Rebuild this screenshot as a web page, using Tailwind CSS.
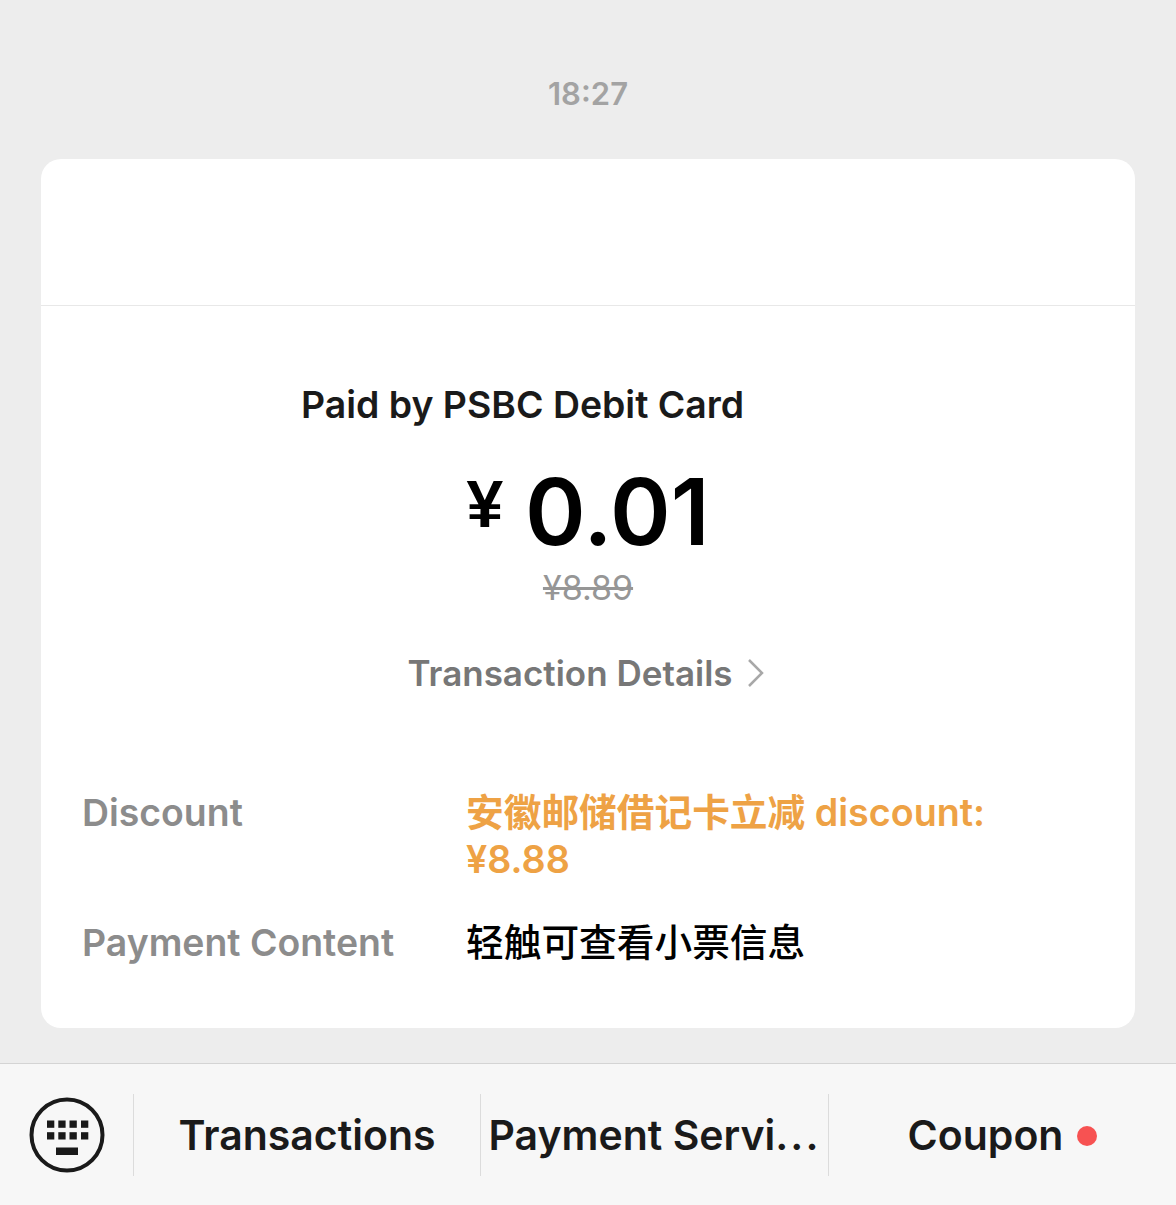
<!DOCTYPE html>
<html lang="en">
<head>
  <meta charset="UTF-8" />
  <title>Payment</title>
  <script src="https://cdn.jsdelivr.net/npm/@tailwindcss/browser@4"></script>
</head>
<body class="bg-[#ededed] w-[1176px] h-[1205px] overflow-hidden flex flex-col font-['Inter','Noto_Sans_CJK_SC',sans-serif]">

  <main class="h-[1063px] px-[41px]">
    <p class="pt-[75px] h-[159px] text-center text-[31px] leading-[38px] font-semibold text-[#a3a3a3]">18:27</p>

    <section class="h-[869px] bg-white rounded-[20px]">
      <div class="h-[147px] border-b border-[#e8e8e8]"></div>

      <div class="flex flex-col items-center">
        <p class="mt-[74px] w-[442px] -translate-x-[66px] text-[37.4px] leading-[50px] font-semibold text-[#1a1a1a] whitespace-nowrap">Paid by PSBC Debit Card</p>
        <div class="mt-[37px] h-[90px] flex items-center text-black">
          <span class="text-[66px] leading-[60px] font-bold -mt-[17px] mr-[22px] font-['Liberation_Sans']">¥</span>
          <span class="text-[92px] leading-[90px] font-semibold">0.01</span>
        </div>
        <p class="mt-[11px] text-[34px] leading-[40px] text-[#969696] line-through">¥8.89</p>
        <div class="mt-[40px] h-[50px] -translate-x-[2px] flex items-center gap-[14px] text-[#777777]">
          <span class="text-[35px] leading-[50px] font-semibold">Transaction Details</span>
          <svg width="18" height="30" viewBox="0 0 18 30" fill="none" stroke="#a8a8a8" stroke-width="2.5"><path d="M2 2l13 13L2 28"/></svg>
        </div>
      </div>

      <dl class="mt-[91px] pl-[41px] grid grid-cols-[384px_1fr] gap-y-[36px] text-[37.4px] leading-[47px] font-semibold">
        <dt class="text-[#8c8c8c]">Discount</dt>
        <dd class="text-[#eea245] w-[540px] text-[37.7px]">安徽邮储借记卡立减 discount: ¥8.88</dd>
        <dt class="text-[#8c8c8c]">Payment Content</dt>
        <dd class="text-black text-[37.7px] font-medium">轻触可查看小票信息</dd>
      </dl>
    </section>
  </main>

  <nav class="flex-1 bg-[#f7f7f7] border-t border-[#d4d4d4] flex items-center text-[41px] font-semibold text-[#1a1a1a]">
    <div class="w-[134px] h-[82px] flex items-center justify-center border-r border-[#dcdcdc]">
      <svg width="76" height="76" viewBox="0 0 76 76" fill="#1a1a1a">
        <circle cx="38" cy="38" r="35.5" fill="none" stroke="#1a1a1a" stroke-width="4"/>
        <rect x="18" y="23.5" width="7.3" height="7.3"/><rect x="29.3" y="23.5" width="7.3" height="7.3"/><rect x="40.5" y="23.5" width="7.3" height="7.3"/><rect x="52" y="23.5" width="7.3" height="7.3"/>
        <rect x="18" y="35.2" width="7.3" height="7.3"/><rect x="29.3" y="35.2" width="7.3" height="7.3"/><rect x="40.5" y="35.2" width="7.3" height="7.3"/><rect x="52" y="35.2" width="7.3" height="7.3"/>
        <rect x="27" y="50.5" width="22" height="7.5"/>
      </svg>
    </div>
    <div class="w-[347px] h-[82px] pt-[2px] flex items-center justify-center border-r border-[#dcdcdc]">Transactions</div>
    <div class="w-[348px] h-[82px] pt-[2px] flex items-center justify-center border-r border-[#dcdcdc] whitespace-nowrap">Payment Servi<span class="tracking-[2px]">...</span></div>
    <div class="flex-1 h-[82px] pt-[2px] flex items-center justify-center gap-[14px]">
      Coupon
      <span class="w-[20px] h-[20px] rounded-full bg-[#f75252]"></span>
    </div>
  </nav>

</body>
</html>
